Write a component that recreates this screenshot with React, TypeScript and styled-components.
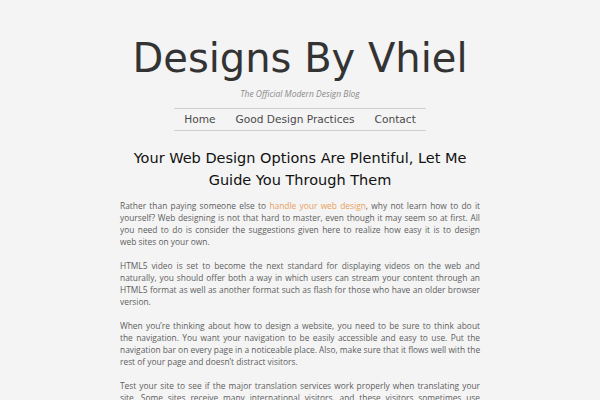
import React from "react";
import styled, { createGlobalStyle } from "styled-components";

const GlobalStyle = createGlobalStyle`
  html, body {
    margin: 0;
    padding: 0;
    background: #f4f4f4;
  }
  body {
    font-family: "DejaVu Sans", sans-serif;
  }
`;

const Page = styled.div`
  width: 360px;
  margin: 0 auto;
  padding-top: 32px;
  display: flex;
  flex-direction: column;
  align-items: center;
`;

const SiteTitle = styled.h1`
  margin: 0;
  font-family: "DejaVu Sans", sans-serif;
  font-weight: 400;
  font-size: 40px;
  line-height: 52px;
  color: #333;
  white-space: nowrap;
`;

const Tagline = styled.div`
  margin-top: 4px;
  font-family: "Open Sans", sans-serif;
  font-style: italic;
  font-size: 8.5px;
  color: #8a8a8a;
`;

const Nav = styled.nav`
  margin-top: 9px;
  display: flex;
  gap: 20px;
  padding: 3px 10px 4px;
  border-top: 1px solid #cfcfcf;
  border-bottom: 1px solid #cfcfcf;
`;

const NavLink = styled.a`
  font-family: "DejaVu Sans", sans-serif;
  font-size: 10.6px;
  line-height: 14px;
  color: #4a4a4a;
  text-decoration: none;
`;

const PostTitle = styled.h2`
  margin: 16px 0 0;
  font-family: "DejaVu Sans", sans-serif;
  font-weight: 400;
  font-size: 14.5px;
  line-height: 22px;
  color: #111;
  text-align: center;
`;

const Article = styled.div`
  margin-top: 9px;
  width: 100%;
`;

const Paragraph = styled.p`
  margin: 0 0 12px;
  font-family: "Open Sans", sans-serif;
  font-size: 8.4px;
  line-height: 12px;
  color: #5e5e5e;
`;

// one printed line of a justified paragraph; the last line stays ragged
const Line = styled.span<{ $last?: boolean }>`
  display: block;
  white-space: nowrap;
  text-align: justify;
  text-align-last: ${({ $last }) => ($last ? "left" : "justify")};
`;

const InlineLink = styled.a`
  color: #e9a05c;
  text-decoration: none;
`;

const paragraphs: React.ReactNode[][] = [
  [
    <>
      Rather than paying someone else to <InlineLink href="#">handle your web design</InlineLink>, why not learn how to do it
    </>,
    "yourself? Web designing is not that hard to master, even though it may seem so at first. All",
    "you need to do is consider the suggestions given here to realize how easy it is to design",
    "web sites on your own.",
  ],
  [
    "HTML5 video is set to become the next standard for displaying videos on the web and",
    "naturally, you should offer both a way in which users can stream your content through an",
    "HTML5 format as well as another format such as flash for those who have an older browser",
    "version.",
  ],
  [
    "When you’re thinking about how to design a website, you need to be sure to think about",
    "the navigation. You want your navigation to be easily accessible and easy to use. Put the",
    "navigation bar on every page in a noticeable place. Also, make sure that it flows well with the",
    "rest of your page and doesn’t distract visitors.",
  ],
  [
    "Test your site to see if the major translation services work properly when translating your",
    "site. Some sites receive many international visitors, and these visitors sometimes use",
    "translation services to read your content.",
  ],
];

const App = () => (
  <>
    <GlobalStyle />
    <Page>
      <SiteTitle>Designs By Vhiel</SiteTitle>
      <Tagline>The Official Modern Design Blog</Tagline>
      <Nav>
        <NavLink href="#">Home</NavLink>
        <NavLink href="#">Good Design Practices</NavLink>
        <NavLink href="#">Contact</NavLink>
      </Nav>
      <PostTitle>
        Your Web Design Options Are Plentiful, Let Me
        <br />
        Guide You Through Them
      </PostTitle>
      <Article>
        {paragraphs.map((lines, i) => (
          <Paragraph key={i}>
            {lines.map((line, j) => (
              <Line key={j} $last={j === lines.length - 1}>
                {line}
              </Line>
            ))}
          </Paragraph>
        ))}
      </Article>
    </Page>
  </>
);

export default App;
